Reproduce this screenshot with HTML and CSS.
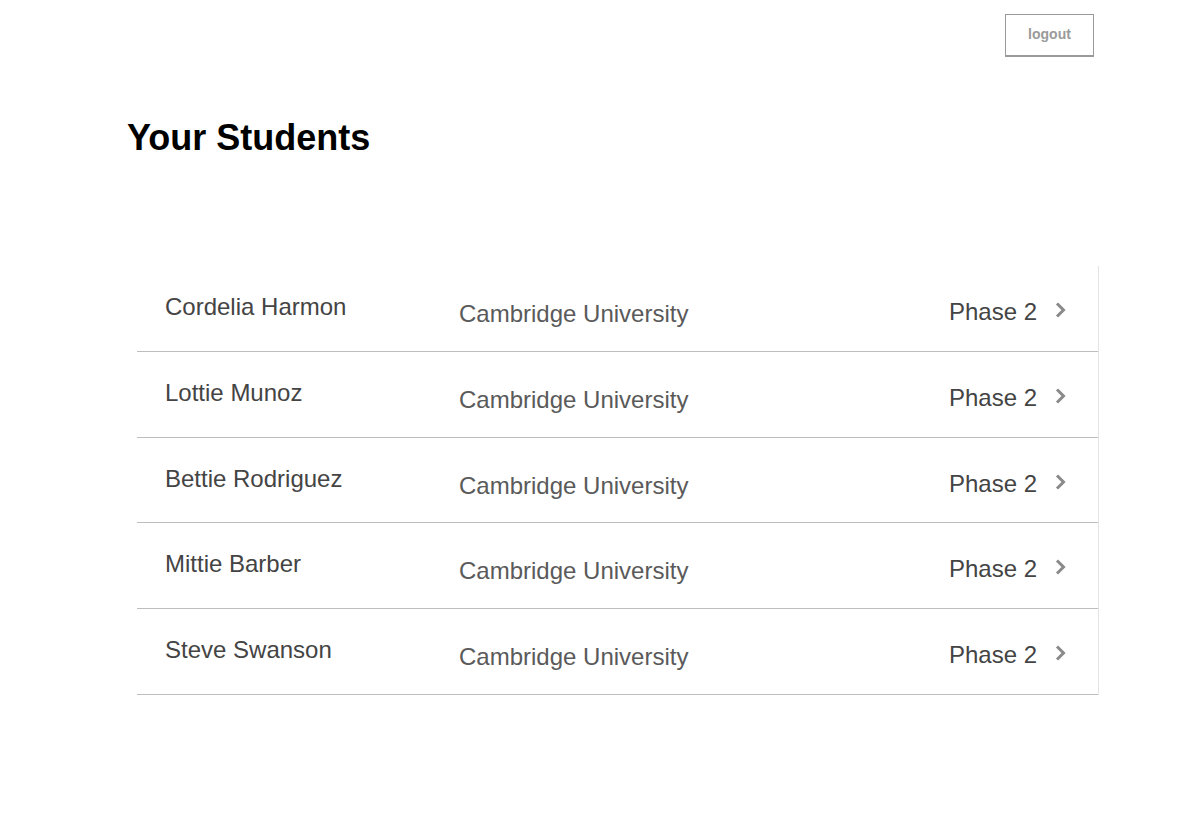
FILE: index.html
```html
<!DOCTYPE html>
<html lang="en">
<head>
<meta charset="utf-8">
<title>Your Students</title>
<link rel="stylesheet" href="styles.css">
</head>
<body>
<header class="topbar">
  <button class="logout" type="button">logout</button>
</header>
<main class="content">
  <h1 class="title">Your Students</h1>
  <ul class="students">
    <li class="student">
      <span class="name">Cordelia Harmon</span>
      <span class="school">Cambridge University</span>
      <span class="phase">Phase 2</span>
      <svg class="chev" width="14" height="18" viewBox="0 0 14 18"><path d="M4 2.5 L10.5 9 L4 15.5" fill="none" stroke="#8a8a8a" stroke-width="3"/></svg>
    </li>
    <li class="student">
      <span class="name">Lottie Munoz</span>
      <span class="school">Cambridge University</span>
      <span class="phase">Phase 2</span>
      <svg class="chev" width="14" height="18" viewBox="0 0 14 18"><path d="M4 2.5 L10.5 9 L4 15.5" fill="none" stroke="#8a8a8a" stroke-width="3"/></svg>
    </li>
    <li class="student">
      <span class="name">Bettie Rodriguez</span>
      <span class="school">Cambridge University</span>
      <span class="phase">Phase 2</span>
      <svg class="chev" width="14" height="18" viewBox="0 0 14 18"><path d="M4 2.5 L10.5 9 L4 15.5" fill="none" stroke="#8a8a8a" stroke-width="3"/></svg>
    </li>
    <li class="student">
      <span class="name">Mittie Barber</span>
      <span class="school">Cambridge University</span>
      <span class="phase">Phase 2</span>
      <svg class="chev" width="14" height="18" viewBox="0 0 14 18"><path d="M4 2.5 L10.5 9 L4 15.5" fill="none" stroke="#8a8a8a" stroke-width="3"/></svg>
    </li>
    <li class="student">
      <span class="name">Steve Swanson</span>
      <span class="school">Cambridge University</span>
      <span class="phase">Phase 2</span>
      <svg class="chev" width="14" height="18" viewBox="0 0 14 18"><path d="M4 2.5 L10.5 9 L4 15.5" fill="none" stroke="#8a8a8a" stroke-width="3"/></svg>
    </li>
  </ul>
</main>
</body>
</html>
```

FILE: styles.css
```css
* { box-sizing: border-box; }

body {
  margin: 0;
  background: #ffffff;
  font-family: "Liberation Sans", Arial, sans-serif;
  color: #000;
}

.topbar {
  display: flex;
  justify-content: flex-end;
  padding: 14px 106px 0 0;
  height: 57px;
}

.logout {
  width: 89px;
  height: 43px;
  background: #fff;
  border: 1px solid #9a9a9a;
  border-bottom-width: 2px;
  border-radius: 0;
  font-family: "Liberation Sans", Arial, sans-serif;
  font-size: 14px;
  font-weight: bold;
  color: #9a9a9a;
  padding: 0 0 2px 0;
  display: flex;
  align-items: center;
  justify-content: center;
}

.content {
  padding-left: 127px;
}

.title {
  margin: 60px 0 0 0;
  font-size: 36px;
  line-height: 42px;
  font-weight: bold;
  color: #000;
}

.students {
  list-style: none;
  margin: 107px 0 0 10px;
  padding: 0;
  width: 962px;
  border-right: 1px solid #e3e3e3;
}

.student {
  display: grid;
  grid-template-columns: 294px 1fr auto 14px;
  column-gap: 16px;
  align-items: start;
  height: 85.75px;
  padding: 0 31px 0 28px;
  border-bottom: 1px solid #bdbdbd;
  font-size: 24px;
  line-height: 28px;
}

.name {
  margin-top: 27px;
  color: #444;
  white-space: nowrap;
}

.school {
  margin-top: 34px;
  margin-left: -16px;
  color: #5a5a5a;
  white-space: nowrap;
}

.phase {
  margin-top: 32px;
  color: #444;
  white-space: nowrap;
}

.chev {
  margin-top: 35px;
  display: block;
}
```
